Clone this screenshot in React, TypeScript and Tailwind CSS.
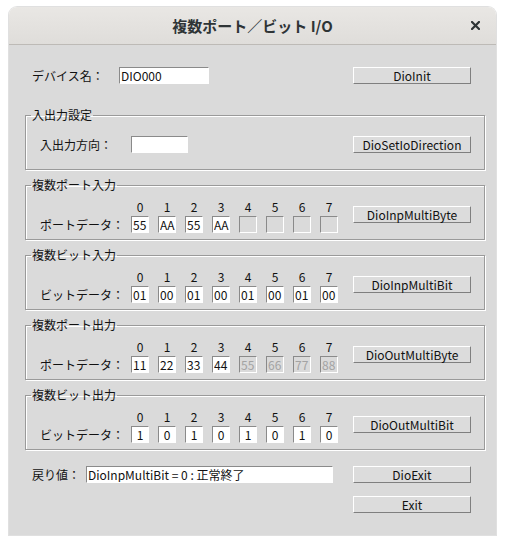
import React from "react";

const FONT = '"Noto Sans CJK JP", "Noto Sans", sans-serif';

function Btn({ label, className = "" }: { label: string; className?: string }) {
  return (
    <button
      className={
        "h-[17px] w-[118px] shrink-0 bg-[#dcdcdc] border border-t-white border-l-white border-r-[#7f7f7f] border-b-[#7f7f7f] text-[12px] leading-[15px] text-[#111] flex items-center justify-center " +
        className
      }
    >
      {label}
    </button>
  );
}

function Field({
  value,
  width,
  disabled = false,
  center = false,
}: {
  value: string;
  width: string;
  disabled?: boolean;
  center?: boolean;
}) {
  return (
    <input
      readOnly
      value={value}
      className={
        "h-[17px] shrink-0 border border-t-[#8a8a8a] border-l-[#8a8a8a] border-r-white border-b-white text-[12px] leading-[15px] outline-none " +
        width +
        " " +
        (disabled ? "bg-[#dadada] text-[#a3a3a3] " : "bg-white text-[#111] ") +
        (center ? "text-center px-0" : "pl-[1px] pr-0")
      }
    />
  );
}

function Group({
  title,
  label,
  values,
  disabled,
  center,
  button,
}: {
  title: string;
  label: string;
  values: string[];
  disabled: boolean[];
  center?: boolean;
  button: string;
}) {
  return (
    <fieldset className="mt-[6px] ml-[16px] w-[460px] border border-[#9a9a9a] shadow-[inset_1px_1px_0_#ffffff,1px_1px_0_#ffffff] pb-[6px]">
      <legend className="ml-[5px] px-[1px] text-[12px] leading-[18px] text-[#111]">{title}</legend>
      <div className="flex pt-[6px] pl-[14px]">
        <div className="flex flex-col">
          <div className="flex h-[14px] ml-[91px] gap-[9px]">
            {values.map((_, i) => (
              <span key={i} className="w-[18px] text-center text-[12px] leading-[14px] text-[#111]">
                {i}
              </span>
            ))}
          </div>
          <div className="flex items-center h-[17px] mt-[2px]">
            <span className="w-[91px] text-[12px] leading-[17px] text-[#111]">{label}</span>
            <div className="flex gap-[9px]">
              {values.map((v, i) => (
                <Field key={i} value={v} width="w-[18px]" disabled={disabled[i]} center={center} />
              ))}
            </div>
          </div>
        </div>
        <Btn label={button} className="ml-auto mr-[13px] mt-[6px]" />
      </div>
    </fieldset>
  );
}

export default function App() {
  const f = [false, false, false, false, false, false, false, false];
  return (
    <div className="w-[505px] h-[545px] bg-white overflow-hidden" style={{ fontFamily: FONT }}>
      <div className="ml-[9px] mt-[7px] w-[487px] rounded-t-[8px] overflow-hidden shadow-[0_0_0_1px_rgba(0,0,0,0.12)]">
        <div className="h-[38px] bg-gradient-to-b from-[#e9e7e4] to-[#dfddda] border-b border-[#bdbab6] flex items-center justify-center relative">
          <span className="text-[15px] font-bold text-[#2e3436] leading-[20px]">複数ポート／ビット I/O</span>
          <svg
            className="absolute right-[16px] top-[14px]"
            width="9"
            height="9"
            viewBox="0 0 9 9"
          >
            <path d="M1 1 L8 8 M8 1 L1 8" stroke="#2e3436" strokeWidth="2.2" strokeLinecap="square" />
          </svg>
        </div>
        <div className="h-[490px] bg-[#dadada] flex flex-col">
          <div className="flex items-center h-[17px] mt-[22px]">
            <span className="ml-[23px] w-[87px] text-[12px] leading-[17px] text-[#111]">デバイス名：</span>
            <Field value="DIO000" width="w-[90px]" />
            <Btn label="DioInit" className="ml-[144px]" />
          </div>

          <fieldset className="mt-[22px] ml-[16px] w-[460px] border border-[#9a9a9a] shadow-[inset_1px_1px_0_#ffffff,1px_1px_0_#ffffff] pb-[16px]">
            <legend className="ml-[5px] px-[1px] text-[12px] leading-[18px] text-[#111]">入出力設定</legend>
            <div className="flex items-center pt-[12px] pl-[14px]">
              <span className="w-[91px] text-[12px] leading-[17px] text-[#111]">入出力方向：</span>
              <Field value="" width="w-[57px]" />
              <Btn label="DioSetIoDirection" className="ml-auto mr-[13px]" />
            </div>
          </fieldset>

          <Group
            title="複数ポート入力"
            label="ポートデータ："
            values={["55", "AA", "55", "AA", "", "", "", ""]}
            disabled={[false, false, false, false, true, true, true, true]}
            button="DioInpMultiByte"
          />
          <Group
            title="複数ビット入力"
            label="ビットデータ："
            values={["01", "00", "01", "00", "01", "00", "01", "00"]}
            disabled={f}
            button="DioInpMultiBit"
          />
          <Group
            title="複数ポート出力"
            label="ポートデータ："
            values={["11", "22", "33", "44", "55", "66", "77", "88"]}
            disabled={[false, false, false, false, true, true, true, true]}
            button="DioOutMultiByte"
          />
          <Group
            title="複数ビット出力"
            label="ビットデータ："
            values={["1", "0", "1", "0", "1", "0", "1", "0"]}
            disabled={f}
            center
            button="DioOutMultiBit"
          />

          <div className="flex items-center h-[17px] mt-[16px]">
            <span className="ml-[23px] w-[54px] text-[12px] leading-[17px] text-[#111]">戻り値：</span>
            <Field value="DioInpMultiBit = 0 : 正常終了" width="w-[247px]" />
            <Btn label="DioExit" className="ml-[20px]" />
          </div>
          <div className="flex items-center h-[17px] mt-[13px]">
            <Btn label="Exit" className="ml-[344px]" />
          </div>
        </div>
      </div>
    </div>
  );
}
